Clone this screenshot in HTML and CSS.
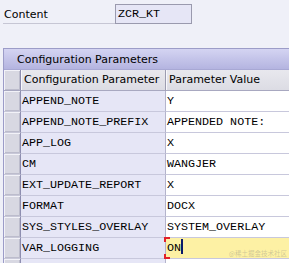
FILE: index.html
```html
<!DOCTYPE html>
<html>
<head>
<meta charset="utf-8">
<link rel="stylesheet" href="styles.css">
</head>
<body>
<div class="field">
  <div class="label">Content</div>
  <div class="input">ZCR_KT</div>
</div>
<div class="panel">
  <div class="title">Configuration Parameters</div>
  <div class="grid">
    <div class="row head"><div class="sel"></div><div class="c1">Configuration Parameter</div><div class="c2">Parameter Value</div></div>
    <div class="row"><div class="sel"></div><div class="c1">APPEND_NOTE</div><div class="c2">Y</div></div>
    <div class="row"><div class="sel"></div><div class="c1">APPEND_NOTE_PREFIX</div><div class="c2">APPENDED NOTE:</div></div>
    <div class="row"><div class="sel"></div><div class="c1">APP_LOG</div><div class="c2">X</div></div>
    <div class="row"><div class="sel"></div><div class="c1">CM</div><div class="c2">WANGJER</div></div>
    <div class="row"><div class="sel"></div><div class="c1">EXT_UPDATE_REPORT</div><div class="c2">X</div></div>
    <div class="row"><div class="sel"></div><div class="c1">FORMAT</div><div class="c2">DOCX</div></div>
    <div class="row"><div class="sel"></div><div class="c1">SYS_STYLES_OVERLAY</div><div class="c2">SYSTEM_OVERLAY</div></div>
    <div class="row"><div class="sel"></div><div class="c1">VAR_LOGGING</div><div class="c2 edit"><span class="brk tl"></span><span class="brk bl"></span>ON<span class="caret"></span><span class="wm">@稀土掘金技术社区</span></div></div>
    <div class="row"><div class="sel"></div><div class="c1"></div><div class="c2"></div></div>
  </div>
</div>
</body>
</html>
```
FILE: styles.css
```css
html, body {
  margin: 0;
  padding: 0;
}
body {
  background: #eff0f8;
  width: 289px;
  height: 263px;
  overflow: hidden;
  font-family: "DejaVu Sans", sans-serif;
  font-size: 11px;
  color: #000;
}
.field {
  display: flex;
  align-items: flex-start;
  padding: 4px 0 0 3px;
  height: 20px;
}
.label {
  width: 111px;
  height: 17px;
  padding: 2px 0 0 1px;
  line-height: 17px;
  border-bottom: 1px solid #c6c6d4;
}
.input {
  width: 73px;
  height: 18px;
  border: 1px solid #9a9aae;
  background: #e6e6f6;
  font-family: "Liberation Mono", monospace;
  font-size: 11.7px;
  line-height: 18px;
  padding-left: 2px;
}
.panel {
  margin: 24px 0 0 3px;
  border-top: 1px solid #9c9cc8;
  border-left: 1px solid #9c9cc8;
}
.title {
  height: 21px;
  line-height: 21px;
  padding-left: 13px;
  background: linear-gradient(#d4d4f2, #b4b4e0);
  box-sizing: border-box;
  border-bottom: 1px solid #a8a8d4;
}
.grid {
  display: flex;
  flex-direction: column;
}
.row {
  display: grid;
  grid-template-columns: 17px 145px 1fr;
  height: 21px;
  box-sizing: border-box;
}
.sel {
  box-sizing: border-box;
  border-right: 1px solid #8e8eb0;
  border-bottom: 1px solid #c8c8d8;
  background: #d8d8e2;
  box-shadow: inset 1px 1px #f2f2f8, inset -1px -1px #bcbccc;
}
.c1, .c2 {
  box-sizing: border-box;
  font-family: "Liberation Mono", monospace;
  font-size: 11.7px;
  line-height: 20px;
  white-space: nowrap;
  overflow: hidden;
  border-bottom: 1px solid #c8c8dc;
  padding-left: 1px;
}
.c1 {
  background: #e6e6f6;
  border-right: 1px solid #b4b4cc;
}
.c2 {
  background: #fff;
  position: relative;
  overflow: visible;
}
.head .c1, .head .c2 {
  font-family: "DejaVu Sans", sans-serif;
  font-size: 11px;
  background: linear-gradient(#e8e8ee, #dcdce4);
  padding-left: 3px;
  border-bottom: 1px solid #a8a8c0;
}
.head .c1 {
  border-right: 1px solid #9c9cb0;
  box-shadow: inset 1px 0 #f8f8fc;
}
.head .c2 {
  box-shadow: inset 1px 0 #f8f8fc;
}
.head .sel {
  border-bottom: 1px solid #a8a8c0;
}
.edit {
  background: #fdf1a4;
}
.caret {
  display: inline-block;
  width: 2px;
  height: 15px;
  background: #0a1a6a;
  vertical-align: -3px;
}
.brk {
  position: absolute;
  left: -2px;
  width: 6px;
  height: 5px;
  border-left: 2px solid #e0202a;
  box-sizing: border-box;
}
.brk.tl {
  top: -1px;
  border-top: 2px solid #e0202a;
}
.brk.bl {
  bottom: -1px;
  border-bottom: 2px solid #e0202a;
}
.wm {
  position: absolute;
  right: 2px;
  top: 11px;
  font-family: "Noto Sans CJK SC", sans-serif;
  font-size: 6.5px;
  line-height: 8px;
  color: rgba(120, 120, 120, 0.35);
}
```
